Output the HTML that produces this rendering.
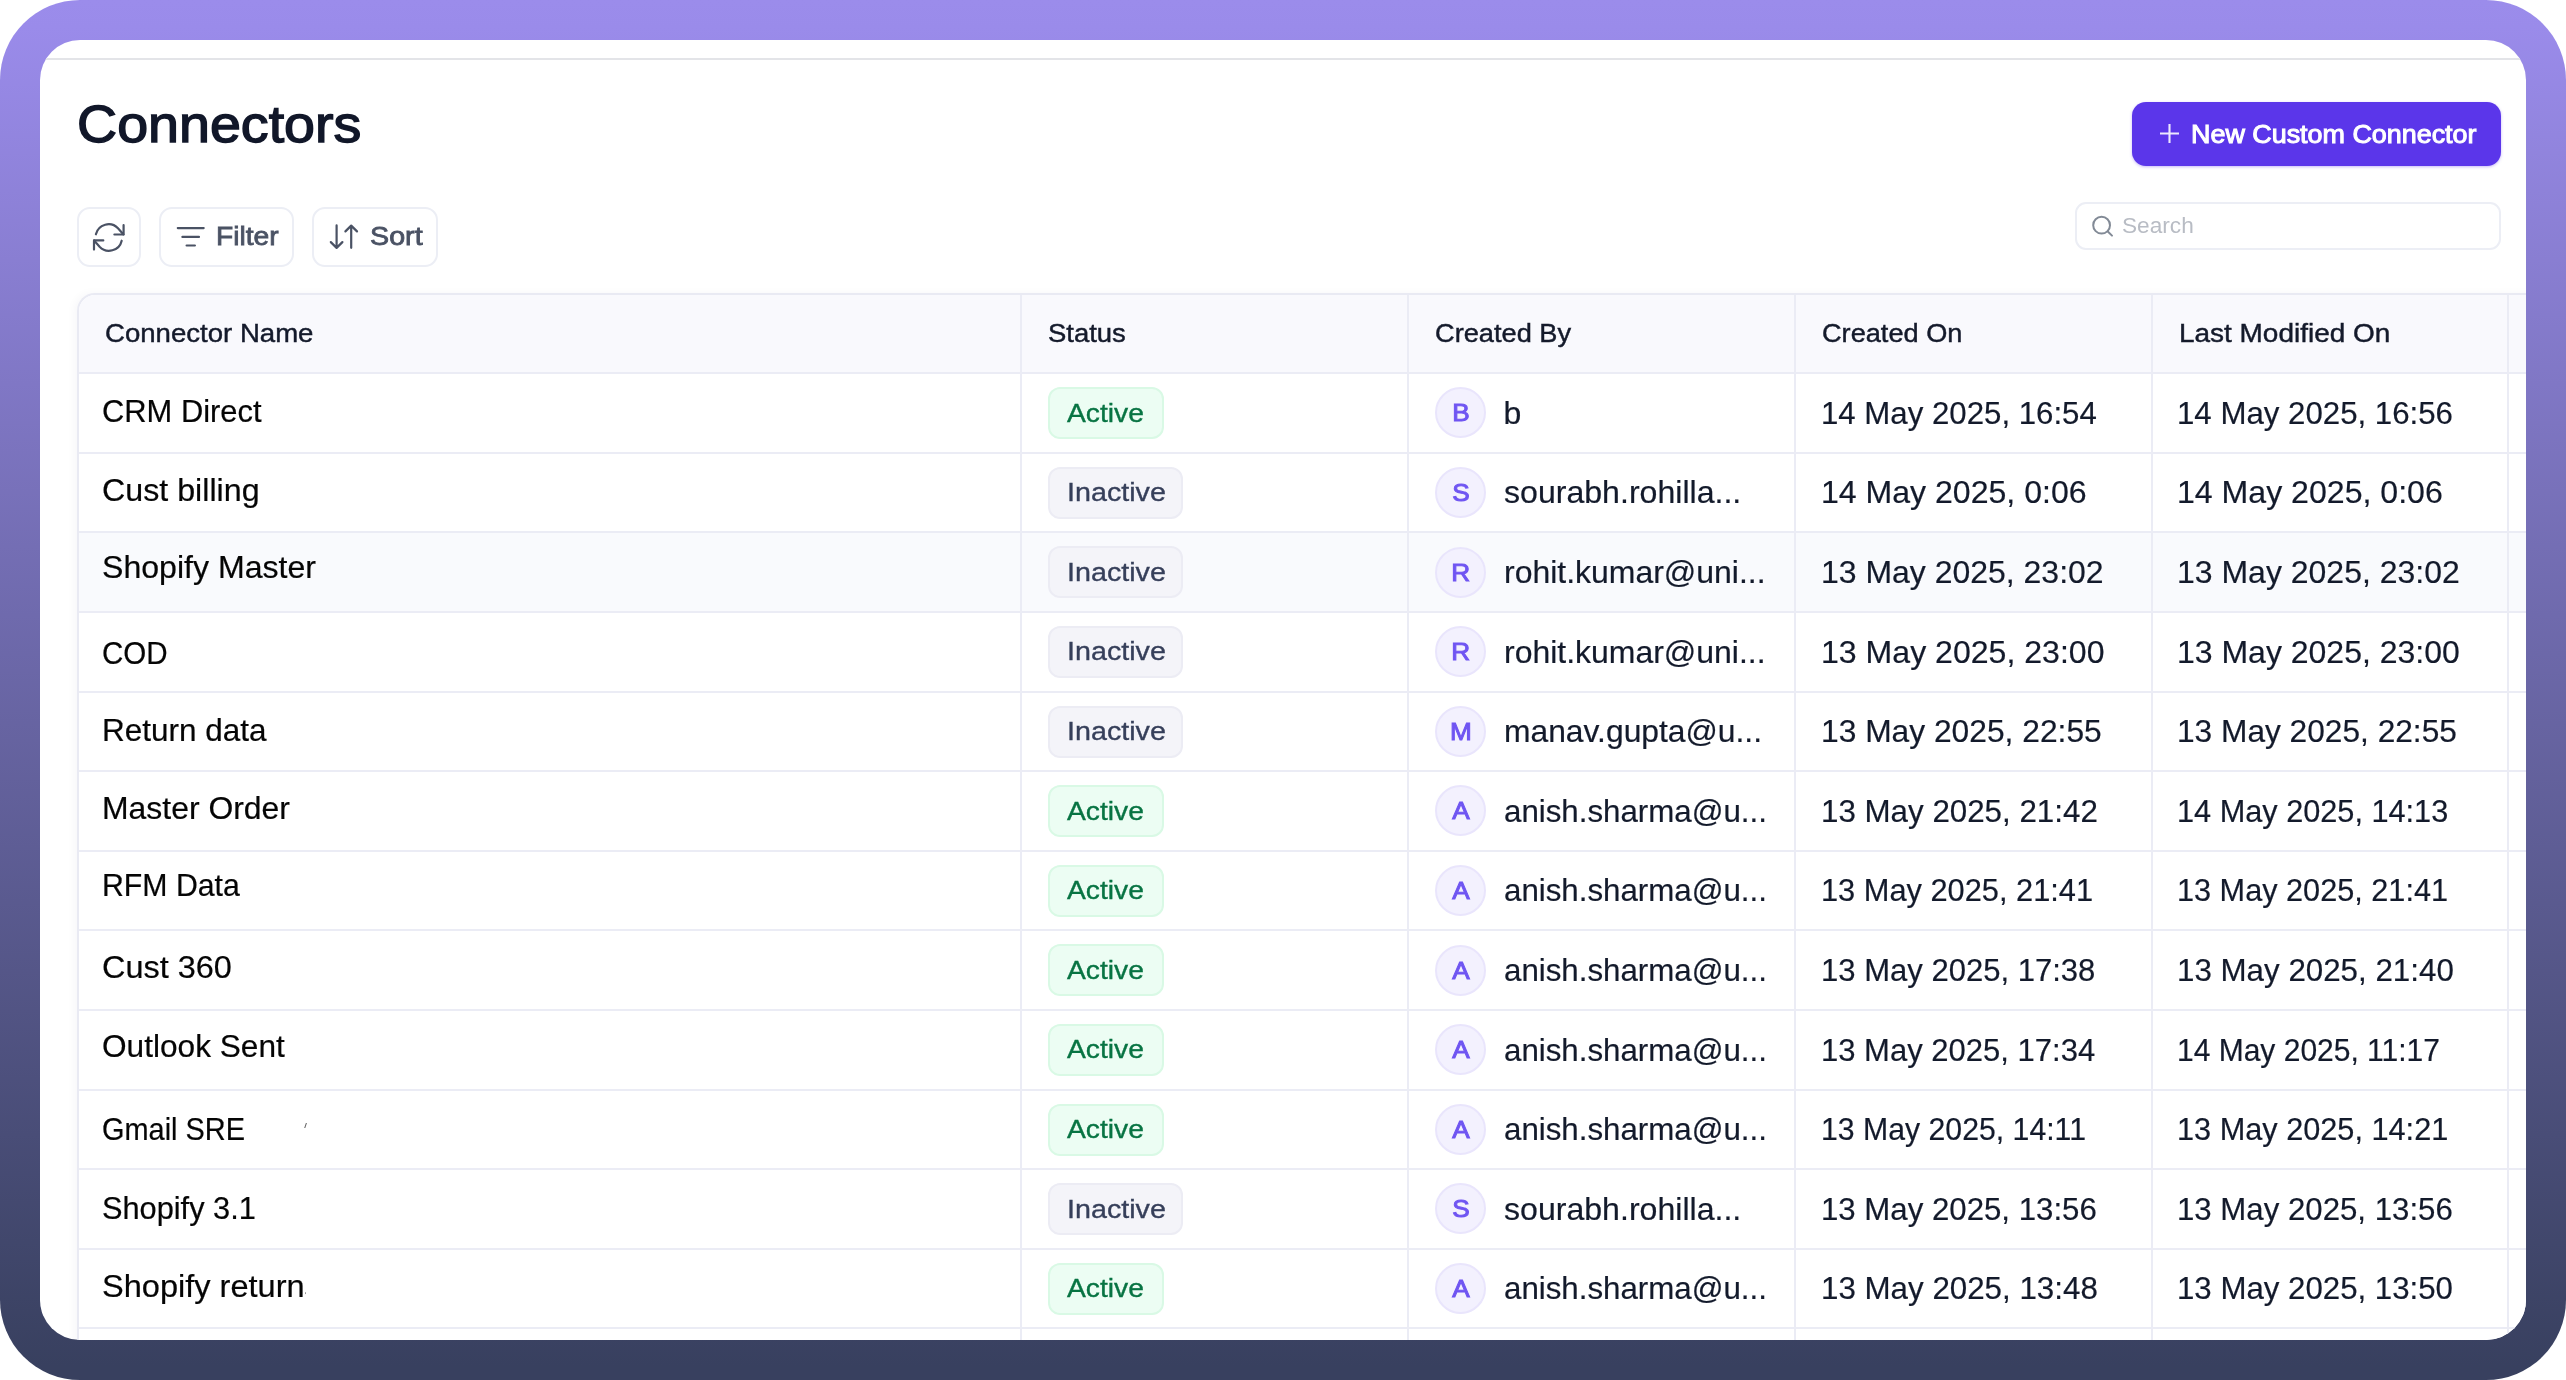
<!DOCTYPE html>
<html lang="en">
<head>
<meta charset="utf-8">
<title>Connectors</title>
<style>
*{box-sizing:border-box;margin:0;padding:0}
html,body{width:2566px;height:1380px;overflow:hidden;background:#fff}
body{font-family:"Liberation Sans",Arial,sans-serif;color:#111827}
.m{white-space:nowrap;display:inline-block;transform-origin:0 50%}
.frame{position:absolute;left:0;top:0;width:2566px;height:1380px;border-radius:80px;
  background:linear-gradient(180deg,#9b8ceb 0%,#9a8bea 2%,#38405f 99%,#38405f 100%);overflow:hidden}
.card{position:absolute;left:40px;top:40px;width:2486px;height:1300px;border-radius:40px;background:#fff;overflow:hidden;will-change:transform}
/* everything inside .card is positioned in page coords minus 40 */
.topline{position:absolute;left:0;top:18px;width:100%;height:2px;background:#e3e4e8}
.title{position:absolute;left:36.6px;top:55px;height:60px;line-height:60px;font-size:51.3px;font-weight:400;color:#111729;-webkit-text-stroke:1.4px #111729}
.primary{position:absolute;left:2092px;top:61.5px;width:369px;height:64px;border:0;border-radius:14px;background:#5b36ea;
  color:#fff;font-family:inherit;font-size:25.3px;font-weight:400;-webkit-text-stroke:1px #fff;display:block;box-shadow:0 1px 3px rgba(91,54,234,.35)}
.primary .plus{position:absolute;left:27.6px;top:22.2px}
.primary .m{position:absolute;left:59.3px;top:0;height:64px;line-height:64px}
.tb{position:absolute;top:166.8px;height:59.8px;border:2px solid #eceef5;border-radius:13px;background:#fff;color:#4a5264;
  font-size:25.6px;font-weight:400;-webkit-text-stroke:.8px #4a5264}
.tb svg{position:absolute}
.tb .m{position:absolute;top:-.3px;height:55.8px;line-height:55.8px}
.tb-refresh{left:37.4px;width:63.2px}
.tb-filter{left:118.7px;width:135.4px}
.tb-filter .m{left:55.2px}
.tb-sort{left:272.4px;width:125.3px}
.tb-sort .m{left:55.3px}
.search{position:absolute;left:2034.6px;top:161.8px;width:426px;height:48.4px;border:2px solid #eceef5;border-radius:11px;background:#fff;
  color:#b8bcc4;font-size:22.6px}
.search svg{position:absolute}
.search .m{position:absolute;left:45.2px;top:0;height:44.4px;line-height:44.4px}
/* table: page x 78.. , y 294.. ; inside card => left 38, top 254 */
.table{position:absolute;left:37px;top:253px;width:2480px;height:1100px;border:2px solid #e9eaf3;border-right:0;border-radius:18px 0 0 0;background:#fff;
  box-shadow:-3px 0 8px rgba(30,30,80,.035)}
/* children of .table are positioned relative to padding box => origin page (79,295)?  we compensate with wrapper offsets below */
.table>*{position:absolute}
.thead{left:0;top:0;width:100%;height:78px;background:#f9f9fd;border-radius:16px 0 0 0}
.hover{left:0;width:100%;background:#f9fafd}
.vl{top:0;width:2px;height:1100px;background:#ebecf5}
.hl{left:0;width:100%;height:2px;background:#ebecf5}
.th{top:16.8px;margin-left:-.6px;height:42px;line-height:42px;font-size:26.6px;font-weight:400;color:#141a2b;-webkit-text-stroke:.45px #141a2b}
.row{left:0;top:0;width:0;height:0}
.row>*{position:absolute}
.name{left:22.9px;height:40px;line-height:40px;margin-top:-29.8px;font-size:31.3px;color:#050505;-webkit-text-stroke:.2px #050505}
.name.clip{width:204.6px;overflow:hidden}
.tick{left:225.6px;top:827.6px;width:1.3px;height:5.4px;background:#222;transform:skewX(-18deg);opacity:.75}
.badge{left:968.5px;height:52px;margin-top:-25.7px;border-radius:12px;border:2px solid;font-size:26px;line-height:48px;-webkit-text-stroke:.35px currentColor}
.badge.active{background:#ecfdf3;border-color:#d9f9e5;color:#087443}
.badge.inactive{background:#f4f4f9;border-color:#ececf4;color:#363f5a}
.av{left:1356px;width:51px;height:51px;margin-top:-25.5px;border-radius:50%;background:#f3f1fe;border:2px solid #e9e5fc;color:#6f55f2;
  font-size:23.8px;font-weight:400;-webkit-text-stroke:.95px #6f55f2;text-align:center;line-height:47.2px}
.av span{display:inline-block;transform:scaleX(1.1)}
.cell{height:40px;line-height:40px;margin-top:-20.2px;font-size:32px;-webkit-text-stroke:.2px #131a2b;color:#131a2b}
.c-by{left:1424.5px}
.c-on{left:1741.5px}
.c-mod{left:2098px}

.badge.active{width:116px}
.badge.inactive{width:135px}
.badge .m{position:absolute;left:17.6px;top:-.6px}

</style>
</head>
<body>
<div class="frame">
<div class="card">
<div class="topline"></div>
<h1 class="title"><span class="m" id="t-title" style="transform:scaleX(1.0839)">Connectors</span></h1>
<button class="primary"><svg class="plus" width="19" height="19" viewBox="0 0 19 19"><path d="M9.5 0v19M0 9.5h19" stroke="#ece8fd" stroke-width="2.1" fill="none"/></svg><span class="m" id="t-new" style="transform:scaleX(1.0632)">New Custom Connector</span></button>
<div class="tb tb-refresh"><svg style="left:-2px;top:-2px" width="63.2" height="59.8" viewBox="76.9 206.1 63.2 59.8" fill="none" stroke="#4a5264" stroke-width="2.2" stroke-linecap="round" stroke-linejoin="round"><path d="M95.8 233.4A13 13 0 0 1 117.9 227.4L123.4 233.5"/><path d="M123.5 224.3V233.6H114.3"/><path d="M121.6 239.8A13 13 0 0 1 99.5 245.8L94 239.6"/><path d="M93.9 248.7V239.5H103.2"/></svg></div>
<div class="tb tb-filter"><svg style="left:-2px;top:-2px" width="135.4" height="59.8" viewBox="158.7 206.8 135.4 59.8" fill="none" stroke="#4a5264" stroke-width="2.2" stroke-linecap="round" stroke-linejoin="round"><path d="M177.5 227.9H203.4M182.1 236.7H198.7M186.3 245.3H194.6"/></svg><span class="m" id="t-filter" style="transform:scaleX(1.0992)">Filter</span></div>
<div class="tb tb-sort"><svg style="left:-2px;top:-2px" width="125.3" height="59.8" viewBox="312.4 206.8 125.3 59.8" fill="none" stroke="#4a5264" stroke-width="2.2" stroke-linecap="round" stroke-linejoin="round"><path d="M337 225.2V247.4M331.2 241.9L337 247.7L342.8 241.9"/><path d="M351.6 247.6V225.6M345.8 231.2L351.6 225.4L357.4 231.2"/></svg><span class="m" id="t-sort" style="transform:scaleX(1.1206)">Sort</span></div>
<div class="search"><svg style="left:-2px;top:-2px" width="60" height="48.4" viewBox="2074.6 201.8 60 48.4" fill="none" stroke="#828a96" stroke-width="2" stroke-linecap="round"><circle cx="2101.2" cy="225" r="8.4"/><path d="M2107.4 231.3L2111.6 235.4"/></svg><span class="m" id="t-search" style="transform:scaleX(1.0031)">Search</span></div>
<div class="table">
<div class="thead"></div>
<div class="hover" style="top:238.3px;height:77.6px"></div>
<div class="vl" style="left:940.9px"></div>
<div class="vl" style="left:1327.8px"></div>
<div class="vl" style="left:1715.0px"></div>
<div class="vl" style="left:2071.8px"></div>
<div class="vl" style="left:2428.3px"></div>
<div class="hl" style="top:77.1px"></div>
<div class="hl" style="top:156.7px"></div>
<div class="hl" style="top:236.3px"></div>
<div class="hl" style="top:315.9px"></div>
<div class="hl" style="top:395.5px"></div>
<div class="hl" style="top:475.1px"></div>
<div class="hl" style="top:554.7px"></div>
<div class="hl" style="top:634.3px"></div>
<div class="hl" style="top:713.9px"></div>
<div class="hl" style="top:793.5px"></div>
<div class="hl" style="top:873.1px"></div>
<div class="hl" style="top:952.7px"></div>
<div class="hl" style="top:1032.3px"></div>
<div class="th" style="left:26.6px"><span class="m" id="t-h0" style="transform:scaleX(1.0369)">Connector Name</span></div>
<div class="th" style="left:969.3px"><span class="m" id="t-h1" style="transform:scaleX(1.0324)">Status</span></div>
<div class="th" style="left:1356.5px"><span class="m" id="t-h2" style="transform:scaleX(1.0229)">Created By</span></div>
<div class="th" style="left:1743.3px"><span class="m" id="t-h3" style="transform:scaleX(1.0209)">Created On</span></div>
<div class="th" style="left:2100.5px"><span class="m" id="t-h4" style="transform:scaleX(1.0508)">Last Modified On</span></div>
<div class="row" id="r0">
<div class="name" style="top:126.5px"><span class="m" id="t-n0" style="transform:scaleX(0.9865)">CRM Direct</span></div>
<div class="badge active" style="top:117.9px"><span class="m" id="t-s0" style="transform:scaleX(1.0861)">Active</span></div>
<div class="av" style="top:117.9px"><span>B</span></div>
<div class="cell c-by" style="top:117.9px"><span class="m" id="t-b0">b</span></div>
<div class="cell c-on" style="top:117.9px"><span class="m" id="t-c0" style="transform:scaleX(0.9750)">14 May 2025, 16:54</span></div>
<div class="cell c-mod" style="top:117.9px"><span class="m" id="t-m0" style="transform:scaleX(0.9756)">14 May 2025, 16:56</span></div>
</div>
<div class="row" id="r1">
<div class="name" style="top:205.6px"><span class="m" id="t-n1" style="transform:scaleX(1.0292)">Cust billing</span></div>
<div class="badge inactive" style="top:197.5px"><span class="m" id="t-s1" style="transform:scaleX(1.1033)">Inactive</span></div>
<div class="av" style="top:197.5px"><span>S</span></div>
<div class="cell c-by" style="top:197.5px"><span class="m" id="t-b1" style="transform:scaleX(1.0028)">sourabh.rohilla...</span></div>
<div class="cell c-on" style="top:197.5px"><span class="m" id="t-c1" style="transform:scaleX(1.0018)">14 May 2025, 0:06</span></div>
<div class="cell c-mod" style="top:197.5px"><span class="m" id="t-m1" style="transform:scaleX(1.0025)">14 May 2025, 0:06</span></div>
</div>
<div class="row" id="r2">
<div class="name" style="top:282.6px"><span class="m" id="t-n2" style="transform:scaleX(1.0250)">Shopify Master</span></div>
<div class="badge inactive" style="top:277.1px"><span class="m" id="t-s2" style="transform:scaleX(1.1033)">Inactive</span></div>
<div class="av" style="top:277.1px"><span>R</span></div>
<div class="cell c-by" style="top:277.1px"><span class="m" id="t-b2" style="transform:scaleX(0.9986)">rohit.kumar@uni...</span></div>
<div class="cell c-on" style="top:277.1px"><span class="m" id="t-c2" style="transform:scaleX(0.9989)">13 May 2025, 23:02</span></div>
<div class="cell c-mod" style="top:277.1px"><span class="m" id="t-m2" style="transform:scaleX(0.9995)">13 May 2025, 23:02</span></div>
</div>
<div class="row" id="r3">
<div class="name" style="top:368.9px"><span class="m" id="t-n3" style="transform:scaleX(0.9445)">COD</span></div>
<div class="badge inactive" style="top:356.7px"><span class="m" id="t-s3" style="transform:scaleX(1.1033)">Inactive</span></div>
<div class="av" style="top:356.7px"><span>R</span></div>
<div class="cell c-by" style="top:356.7px"><span class="m" id="t-b3" style="transform:scaleX(0.9986)">rohit.kumar@uni...</span></div>
<div class="cell c-on" style="top:356.7px"><span class="m" id="t-c3" style="transform:scaleX(1.0024)">13 May 2025, 23:00</span></div>
<div class="cell c-mod" style="top:356.7px"><span class="m" id="t-m3" style="transform:scaleX(0.9996)">13 May 2025, 23:00</span></div>
</div>
<div class="row" id="r4">
<div class="name" style="top:445.9px"><span class="m" id="t-n4" style="transform:scaleX(1.0062)">Return data</span></div>
<div class="badge inactive" style="top:436.3px"><span class="m" id="t-s4" style="transform:scaleX(1.1033)">Inactive</span></div>
<div class="av" style="top:436.3px"><span>M</span></div>
<div class="cell c-by" style="top:436.3px"><span class="m" id="t-b4" style="transform:scaleX(0.9939)">manav.gupta@u...</span></div>
<div class="cell c-on" style="top:436.3px"><span class="m" id="t-c4" style="transform:scaleX(0.9923)">13 May 2025, 22:55</span></div>
<div class="cell c-mod" style="top:436.3px"><span class="m" id="t-m4" style="transform:scaleX(0.9894)">13 May 2025, 22:55</span></div>
</div>
<div class="row" id="r5">
<div class="name" style="top:524.0px"><span class="m" id="t-n5" style="transform:scaleX(1.0197)">Master Order</span></div>
<div class="badge active" style="top:515.9px"><span class="m" id="t-s5" style="transform:scaleX(1.0861)">Active</span></div>
<div class="av" style="top:515.9px"><span>A</span></div>
<div class="cell c-by" style="top:515.9px"><span class="m" id="t-b5" style="transform:scaleX(0.9773)">anish.sharma@u...</span></div>
<div class="cell c-on" style="top:515.9px"><span class="m" id="t-c5" style="transform:scaleX(0.9785)">13 May 2025, 21:42</span></div>
<div class="cell c-mod" style="top:515.9px"><span class="m" id="t-m5" style="transform:scaleX(0.9589)">14 May 2025, 14:13</span></div>
</div>
<div class="row" id="r6">
<div class="name" style="top:601.1px"><span class="m" id="t-n6" style="transform:scaleX(0.9664)">RFM Data</span></div>
<div class="badge active" style="top:595.5px"><span class="m" id="t-s6" style="transform:scaleX(1.0861)">Active</span></div>
<div class="av" style="top:595.5px"><span>A</span></div>
<div class="cell c-by" style="top:595.5px"><span class="m" id="t-b6" style="transform:scaleX(0.9773)">anish.sharma@u...</span></div>
<div class="cell c-on" style="top:595.5px"><span class="m" id="t-c6" style="transform:scaleX(0.9619)">13 May 2025, 21:41</span></div>
<div class="cell c-mod" style="top:595.5px"><span class="m" id="t-m6" style="transform:scaleX(0.9582)">13 May 2025, 21:41</span></div>
</div>
<div class="row" id="r7">
<div class="name" style="top:682.8px"><span class="m" id="t-n7" style="transform:scaleX(1.0372)">Cust 360</span></div>
<div class="badge active" style="top:675.1px"><span class="m" id="t-s7" style="transform:scaleX(1.0861)">Active</span></div>
<div class="av" style="top:675.1px"><span>A</span></div>
<div class="cell c-by" style="top:675.1px"><span class="m" id="t-b7" style="transform:scaleX(0.9773)">anish.sharma@u...</span></div>
<div class="cell c-on" style="top:675.1px"><span class="m" id="t-c7" style="transform:scaleX(0.9698)">13 May 2025, 17:38</span></div>
<div class="cell c-mod" style="top:675.1px"><span class="m" id="t-m7" style="transform:scaleX(0.9785)">13 May 2025, 21:40</span></div>
</div>
<div class="row" id="r8">
<div class="name" style="top:761.9px"><span class="m" id="t-n8" style="transform:scaleX(1.0100)">Outlook Sent</span></div>
<div class="badge active" style="top:754.7px"><span class="m" id="t-s8" style="transform:scaleX(1.0861)">Active</span></div>
<div class="av" style="top:754.7px"><span>A</span></div>
<div class="cell c-by" style="top:754.7px"><span class="m" id="t-b8" style="transform:scaleX(0.9773)">anish.sharma@u...</span></div>
<div class="cell c-on" style="top:754.7px"><span class="m" id="t-c8" style="transform:scaleX(0.9692)">13 May 2025, 17:34</span></div>
<div class="cell c-mod" style="top:754.7px"><span class="m" id="t-m8" style="transform:scaleX(0.9374)">14 May 2025, 11:17</span></div>
</div>
<div class="row" id="r9">
<div class="name" style="top:844.3px"><span class="m" id="t-n9" style="transform:scaleX(0.9235)">Gmail SRE</span></div>
<div class="badge active" style="top:834.3px"><span class="m" id="t-s9" style="transform:scaleX(1.0861)">Active</span></div>
<div class="av" style="top:834.3px"><span>A</span></div>
<div class="cell c-by" style="top:834.3px"><span class="m" id="t-b9" style="transform:scaleX(0.9773)">anish.sharma@u...</span></div>
<div class="cell c-on" style="top:834.3px"><span class="m" id="t-c9" style="transform:scaleX(0.9447)">13 May 2025, 14:11</span></div>
<div class="cell c-mod" style="top:834.3px"><span class="m" id="t-m9" style="transform:scaleX(0.9590)">13 May 2025, 14:21</span></div>
</div>
<div class="row" id="r10">
<div class="name" style="top:924.1px"><span class="m" id="t-n10" style="transform:scaleX(0.9820)">Shopify 3.1</span></div>
<div class="badge inactive" style="top:913.9px"><span class="m" id="t-s10" style="transform:scaleX(1.1033)">Inactive</span></div>
<div class="av" style="top:913.9px"><span>S</span></div>
<div class="cell c-by" style="top:913.9px"><span class="m" id="t-b10" style="transform:scaleX(1.0028)">sourabh.rohilla...</span></div>
<div class="cell c-on" style="top:913.9px"><span class="m" id="t-c10" style="transform:scaleX(0.9749)">13 May 2025, 13:56</span></div>
<div class="cell c-mod" style="top:913.9px"><span class="m" id="t-m10" style="transform:scaleX(0.9749)">13 May 2025, 13:56</span></div>
</div>
<div class="row" id="r11">
<div class="name clip" style="top:1001.5px"><span class="m" id="t-n11" style="transform:scaleX(1.0397)">Shopify returns</span></div>
<div class="badge active" style="top:993.5px"><span class="m" id="t-s11" style="transform:scaleX(1.0861)">Active</span></div>
<div class="av" style="top:993.5px"><span>A</span></div>
<div class="cell c-by" style="top:993.5px"><span class="m" id="t-b11" style="transform:scaleX(0.9773)">anish.sharma@u...</span></div>
<div class="cell c-on" style="top:993.5px"><span class="m" id="t-c11" style="transform:scaleX(0.9785)">13 May 2025, 13:48</span></div>
<div class="cell c-mod" style="top:993.5px"><span class="m" id="t-m11" style="transform:scaleX(0.9756)">13 May 2025, 13:50</span></div>
</div>
<div class="tick"></div>
</div>
</div>
</div>
</body>
</html>
